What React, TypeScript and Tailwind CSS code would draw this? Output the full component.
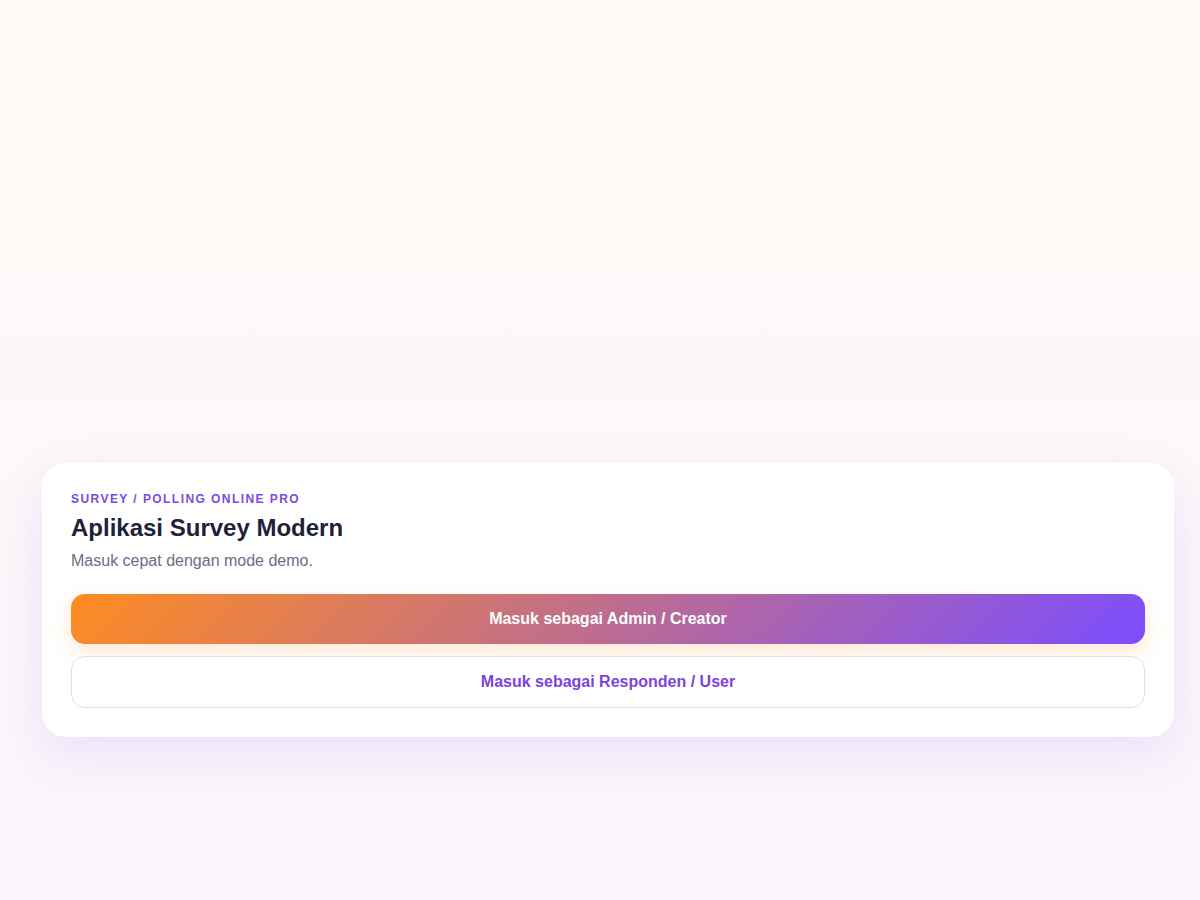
export default function App() {
  return (
    <div
      className="min-h-screen w-full bg-gradient-to-b from-[#fffaf5] to-[#faf5fc] pl-[42px] pr-[26px] pt-[463px] pb-10"
      style={{ fontFamily: '"Liberation Sans", Arial, sans-serif' }}
    >
      <div className="rounded-[24px] bg-white px-[29px] pt-[28px] pb-[29px] shadow-[0_18px_50px_rgba(124,77,255,0.12)]">
        <div className="text-[12px] leading-4 font-bold uppercase tracking-[0.12em] text-[#7b4ae2]">
          Survey / Polling Online Pro
        </div>
        <h1 className="mt-[5px] text-[24px] leading-8 font-bold text-[#221f38]">
          Aplikasi Survey Modern
        </h1>
        <p className="mt-[5px] text-[16px] leading-6 text-[#6e6b86]">
          Masuk cepat dengan mode demo.
        </p>
        <div className="mt-[21px] flex flex-col gap-[12px]">
          <button className="h-[50px] w-full rounded-[14px] bg-[linear-gradient(135deg,#ff8c21,#7b4dff)] text-[16px] font-bold text-white shadow-[0_8px_22px_rgba(255,145,50,0.22)]">
            Masuk sebagai Admin / Creator
          </button>
          <button className="h-[52px] w-full rounded-[14px] border border-[#e2ddf3] bg-white text-[16px] font-bold text-[#7b43e0]">
            Masuk sebagai Responden / User
          </button>
        </div>
      </div>
    </div>
  );
}
